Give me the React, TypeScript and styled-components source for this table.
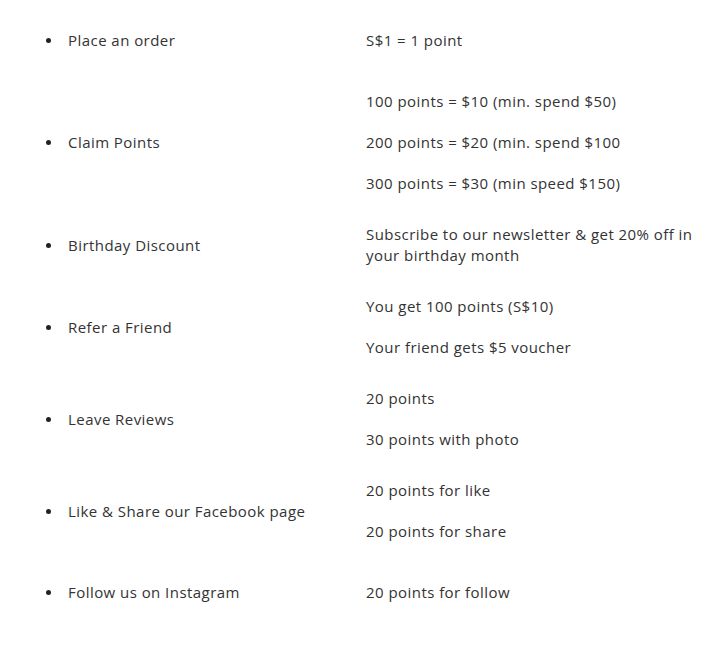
import React from 'react';
import styled, { createGlobalStyle } from 'styled-components';

const GlobalStyle = createGlobalStyle`
    html, body {
        margin: 0;
        padding: 0;
        background: #ffffff;
    }
    body {
        font-family: 'Open Sans', 'Liberation Sans', sans-serif;
        font-size: 15px;
        letter-spacing: 0.45px;
        color: #333333;
    }
`;

const Table = styled.div`
    padding-top: 5px;
    width: 719px;
`;

const Row = styled.div`
    display: grid;
    grid-template-columns: 366px 353px;
    align-items: center;
    min-height: 71px;
`;

const Label = styled.div`
    position: relative;
    padding-left: 68px;
    line-height: 21px;

    &::before {
        content: '';
        position: absolute;
        left: 46px;
        top: 8px;
        width: 5px;
        height: 5px;
        border-radius: 50%;
        background: #222222;
    }
`;

const Details = styled.div`
    display: flex;
    flex-direction: column;
    gap: 20px;
    padding: 15px 0;
`;

const Line = styled.p`
    margin: 0;
    line-height: 21px;
`;

const rewards = [
    { label: 'Place an order', lines: ['S$1 = 1 point'] },
    {
        label: 'Claim Points',
        lines: [
            '100 points = $10 (min. spend $50)',
            '200 points = $20 (min. spend $100',
            '300 points = $30 (min speed $150)',
        ],
    },
    {
        label: 'Birthday Discount',
        lines: ['Subscribe to our newsletter & get 20% off in your birthday month'],
    },
    { label: 'Refer a Friend', lines: ['You get 100 points (S$10)', 'Your friend gets $5 voucher'] },
    { label: 'Leave Reviews', lines: ['20 points', '30 points with photo'] },
    { label: 'Like & Share our Facebook page', lines: ['20 points for like', '20 points for share'] },
    { label: 'Follow us on Instagram', lines: ['20 points for follow'] },
];

const App = () => (
    <>
        <GlobalStyle />
        <Table>
            {rewards.map((r) => (
                <Row key={r.label}>
                    <Label>{r.label}</Label>
                    <Details>
                        {r.lines.map((l) => (
                            <Line key={l}>{l}</Line>
                        ))}
                    </Details>
                </Row>
            ))}
        </Table>
    </>
);

export default App;
